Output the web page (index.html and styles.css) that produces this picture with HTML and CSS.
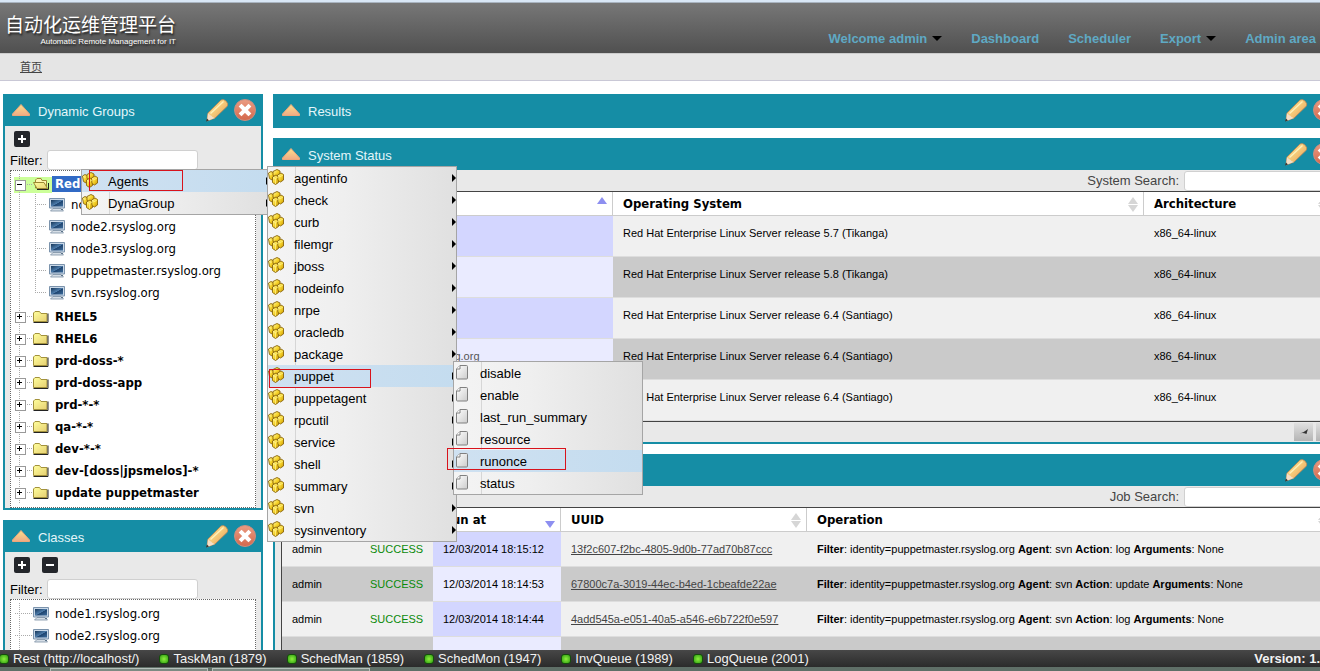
FILE: index.html
```html
<!DOCTYPE html>
<html lang="zh">
 <head>
  <meta charset="utf-8">
  <title>自动化运维管理平台</title>
  <link rel="stylesheet" href="styles.css">
 </head>
 <body>
  <svg class="defs" aria-hidden="true">
	<defs>
		<linearGradient id="gOrange" x1="0" y1="0" x2="0" y2="1"><stop offset="0" stop-color="#fbe08c"/><stop offset="1" stop-color="#f0aa84"/></linearGradient>
		<linearGradient id="gRed" x1="0" y1="0" x2="0" y2="1"><stop offset="0" stop-color="#eb9c82"/><stop offset="1" stop-color="#d4684c"/></linearGradient>
		<linearGradient id="gFolder" x1="0" y1="0" x2="1" y2="1"><stop offset="0" stop-color="#ffff9c"/><stop offset="1" stop-color="#e6cf72"/></linearGradient>
		<linearGradient id="gGold" x1="0" y1="0" x2="1" y2="1"><stop offset="0" stop-color="#fffbb0"/><stop offset=".5" stop-color="#f7d52c"/><stop offset="1" stop-color="#c99606"/></linearGradient>
		<linearGradient id="gPage" x1="0" y1="0" x2="1" y2="1"><stop offset="0" stop-color="#fff"/><stop offset="1" stop-color="#ccc"/></linearGradient>
		<linearGradient id="gScreen" x1="0" y1="0" x2="1" y2="1"><stop offset="0" stop-color="#173759"/><stop offset=".5" stop-color="#4d7cab"/><stop offset=".55" stop-color="#1f4570"/><stop offset="1" stop-color="#3d6c9c"/></linearGradient>
		<linearGradient id="gPencil" x1="0" y1="0" x2="1" y2="1"><stop offset="0" stop-color="#fce596"/><stop offset=".5" stop-color="#f5c877"/><stop offset="1" stop-color="#dd8f56"/></linearGradient>
	</defs>
	<symbol id="i-up" viewBox="0 0 20 14"><path d="M10 1.500L18.500 11V12.500H1.500V11Z" fill="url(#gOrange)" stroke="#eda77a" stroke-linejoin="round"/></symbol>
	<symbol id="i-pencil" viewBox="0 0 24 24"><path d="M3 15L16 2Q18.500 .5 21 3T22.500 8L10 20L2 23Z" fill="url(#gPencil)" stroke="#b98655" stroke-width=".8"/><path d="M3 15Q4 16.500 5 17Q6.500 17.500 7.500 19L10 20L2 23Z" fill="#f3dfc8"/><path d="M5.500 15.500L18.500 3.500" stroke="#fff0b8" stroke-width="1.500"/><path d="M2 20.500L1 23.500L4 22.500Z" fill="#333"/></symbol>
	<symbol id="i-close" viewBox="0 0 24 24"><circle cx="12" cy="12" r="10.500" fill="url(#gRed)" stroke="#c98e80" stroke-width="1"/><path d="M8.500 8.500L15.500 15.500M15.500 8.500L8.500 15.500" stroke="#fff" stroke-width="4" stroke-linecap="square"/></symbol>
	<symbol id="i-plus" viewBox="0 0 16 16"><rect width="16" height="16" rx="2" fill="#24262b"/><path d="M8 4V12M4 8H12" stroke="#fff" stroke-width="2"/></symbol>
	<symbol id="i-minus" viewBox="0 0 16 16"><rect width="16" height="16" rx="2" fill="#24262b"/><path d="M4 8H12" stroke="#fff" stroke-width="2"/></symbol>
	<symbol id="i-folder" viewBox="0 0 16 16"><path d="M.5 12.500V4L2 2.500H6.500L8 4.500H14V12.500Z" fill="url(#gFolder)" stroke="#a3923c"/><path d="M.5 13.500H15V4.500" fill="none" stroke="#222"/></symbol>
	<symbol id="i-open" viewBox="0 0 16 16"><path d="M2.500 12V4L4 2.500H8L9 4.500H13.500V12Z" fill="#fff8b0" stroke="#9b8a35"/><path d="M.5 6.500H11L14.500 12.500H4Z" fill="url(#gFolder)" stroke="#9b8a35"/><path d="M4 13.500H15.500V7" fill="none" stroke="#222"/></symbol>
	<symbol id="i-pc" viewBox="0 0 16 16"><path d="M.5 1.500H15.500V11H.5Z" fill="#c9d8e8" stroke="#7b93ac"/><path d="M2 3H14V9.500H2Z" fill="url(#gScreen)"/><path d="M4 11.500H12L14.500 14H1.500Z" fill="#d6dee6" stroke="#7b8fa3" stroke-width=".8"/><path d="M12 12.500H14" stroke="#5b7288"/></symbol>
	<symbol id="i-bricks" viewBox="0 0 17 17"><g fill="url(#gGold)" stroke="#8a6508" stroke-width=".9" stroke-linejoin="round"><path d="M.5 4L3 2.500L6 4V9L4 11L1.500 9.500Z"/><path d="M5 2.500L9 .5L12 2V5L8 8L5 6.500Z"/><path d="M4.500 8L8 6L10.500 7.500V13.500L7.500 15.500L4.500 13.500Z"/><path d="M9.500 6L13 4L15.500 5.500V11L12.500 13L10 11.500Z"/></g><path d="M5 8.500L7.500 9.500L10 8M7.500 9.500V15M10 6.500L12.500 7.500L15 6M1 4.500L3.500 5.500" stroke="#fff69a" stroke-width=".7" fill="none"/></symbol>
	<symbol id="i-page" viewBox="0 0 17 17"><path d="M6 1.500H12.500Q13.500 1.500 13.500 2.500V14Q13.500 15 12.500 15H3.500Q2.500 15 2.500 14V5Z" fill="url(#gPage)" stroke="#808080"/><path d="M6 1.500V5H2.500" fill="#fff" stroke="#808080"/></symbol>
  </svg>
  <div class="strip"></div>
  <header class="top">
	<div class="logo">
		<h1>自动化运维管理平台</h1>
		<p>Automatic Remote Management for IT</p>
	</div>
	<nav>
		<a href="#" class="drop">Welcome admin</a>
		<a href="#">Dashboard</a>
		<a href="#">Scheduler</a>
		<a href="#" class="drop">Export</a>
		<a href="#" class="drop">Admin area</a>
	</nav>
  </header>
  <div class="crumb"><a href="#">首页</a></div>

  <div class="page">
	<aside class="side">
		<section class="panel">
			<div class="title">
				<svg class="up"><use href="#i-up"/></svg>
				<h2>Dynamic Groups</h2>
				<button aria-label="Edit"><svg><use href="#i-pencil"/></svg></button>
				<button aria-label="Close"><svg><use href="#i-close"/></svg></button>
			</div>
			<div class="tools">
				<button aria-label="Expand"><svg><use href="#i-plus"/></svg></button>
			</div>
			<div class="filter"><label for="f1">Filter:</label><input type="text" id="f1"></div>
			<ul class="tree">
				<li class="open">
					<div class="row current"><i class="box"></i><svg><use href="#i-open"/></svg><b>Red</b></div>
					<ul>
						<li class="row"><svg><use href="#i-pc"/></svg>node1.rsyslog.org</li>
						<li class="row"><svg><use href="#i-pc"/></svg>node2.rsyslog.org</li>
						<li class="row"><svg><use href="#i-pc"/></svg>node3.rsyslog.org</li>
						<li class="row"><svg><use href="#i-pc"/></svg>puppetmaster.rsyslog.org</li>
						<li class="row"><svg><use href="#i-pc"/></svg>svn.rsyslog.org</li>
					</ul>
					<!-- right click menu -->
					<ul class="menu context">
						<li class="sub hover"><svg><use href="#i-bricks"/></svg>Agents<span class="mark m1"></span>
							<ul class="menu">
								<li class="sub"><svg><use href="#i-bricks"/></svg>agentinfo</li>
								<li class="sub"><svg><use href="#i-bricks"/></svg>check</li>
								<li class="sub"><svg><use href="#i-bricks"/></svg>curb</li>
								<li class="sub"><svg><use href="#i-bricks"/></svg>filemgr</li>
								<li class="sub"><svg><use href="#i-bricks"/></svg>jboss</li>
								<li class="sub"><svg><use href="#i-bricks"/></svg>nodeinfo</li>
								<li class="sub"><svg><use href="#i-bricks"/></svg>nrpe</li>
								<li class="sub"><svg><use href="#i-bricks"/></svg>oracledb</li>
								<li class="sub"><svg><use href="#i-bricks"/></svg>package</li>
								<li class="sub hover"><svg><use href="#i-bricks"/></svg>puppet<span class="mark m2"></span>
									<ul class="menu">
										<li><svg><use href="#i-page"/></svg>disable</li>
										<li><svg><use href="#i-page"/></svg>enable</li>
										<li><svg><use href="#i-page"/></svg>last_run_summary</li>
										<li><svg><use href="#i-page"/></svg>resource</li>
										<li class="hover"><svg><use href="#i-page"/></svg>runonce<span class="mark m3"></span></li>
										<li><svg><use href="#i-page"/></svg>status</li>
									</ul>
								</li>
								<li class="sub"><svg><use href="#i-bricks"/></svg>puppetagent</li>
								<li class="sub"><svg><use href="#i-bricks"/></svg>rpcutil</li>
								<li class="sub"><svg><use href="#i-bricks"/></svg>service</li>
								<li class="sub"><svg><use href="#i-bricks"/></svg>shell</li>
								<li class="sub"><svg><use href="#i-bricks"/></svg>summary</li>
								<li class="sub"><svg><use href="#i-bricks"/></svg>svn</li>
								<li class="sub"><svg><use href="#i-bricks"/></svg>sysinventory</li>
							</ul>
						</li>
						<li class="sub"><svg><use href="#i-bricks"/></svg>DynaGroup</li>
					</ul>
				</li>
				<li class="row"><i class="box plus"></i><svg><use href="#i-folder"/></svg><b>RHEL5</b></li>
				<li class="row"><i class="box plus"></i><svg><use href="#i-folder"/></svg><b>RHEL6</b></li>
				<li class="row"><i class="box plus"></i><svg><use href="#i-folder"/></svg><b>prd-doss-*</b></li>
				<li class="row"><i class="box plus"></i><svg><use href="#i-folder"/></svg><b>prd-doss-app</b></li>
				<li class="row"><i class="box plus"></i><svg><use href="#i-folder"/></svg><b>prd-*-*</b></li>
				<li class="row"><i class="box plus"></i><svg><use href="#i-folder"/></svg><b>qa-*-*</b></li>
				<li class="row"><i class="box plus"></i><svg><use href="#i-folder"/></svg><b>dev-*-*</b></li>
				<li class="row"><i class="box plus"></i><svg><use href="#i-folder"/></svg><b>dev-[doss|jpsmelos]-*</b></li>
				<li class="row"><i class="box plus"></i><svg><use href="#i-folder"/></svg><b>update puppetmaster</b></li>
			</ul>
		</section>
		<section class="panel">
			<div class="title">
				<svg class="up"><use href="#i-up"/></svg>
				<h2>Classes</h2>
				<button aria-label="Edit"><svg><use href="#i-pencil"/></svg></button>
				<button aria-label="Close"><svg><use href="#i-close"/></svg></button>
			</div>
			<div class="tools two">
				<button aria-label="Expand"><svg><use href="#i-plus"/></svg></button>
				<button aria-label="Collapse"><svg><use href="#i-minus"/></svg></button>
			</div>
			<div class="filter"><label for="f2">Filter:</label><input type="text" id="f2"></div>
			<ul class="tree">
				<li class="row"><i></i><svg><use href="#i-pc"/></svg>node1.rsyslog.org</li>
				<li class="row"><i></i><svg><use href="#i-pc"/></svg>node2.rsyslog.org</li>
				<li class="row"><i></i></li>
			</ul>
		</section>
	</aside>

	<main>
		<section class="panel">
			<div class="title">
				<svg class="up"><use href="#i-up"/></svg>
				<h2>Results</h2>
				<button aria-label="Edit"><svg><use href="#i-pencil"/></svg></button>
				<button aria-label="Close"><svg><use href="#i-close"/></svg></button>
			</div>
		</section>
		<section class="panel">
			<div class="title">
				<svg class="up"><use href="#i-up"/></svg>
				<h2>System Status</h2>
				<button aria-label="Edit"><svg><use href="#i-pencil"/></svg></button>
				<button aria-label="Close"><svg><use href="#i-close"/></svg></button>
			</div>
			<div class="search"><label for="s1">System Search:</label><input type="text" id="s1"></div>
			<table class="system">
				<colgroup><col class="c-sel"><col class="c-name"><col class="c-os"><col></colgroup>
				<thead><tr><th></th><th class="asc"></th><th class="sort">Operating System</th><th class="sort">Architecture</th></tr></thead>
				<tbody>
					<tr><td class="on"></td><td class="on"></td><td>Red Hat Enterprise Linux Server release 5.7 (Tikanga)</td><td>x86_64-linux</td></tr>
					<tr><td class="on"></td><td class="on"></td><td>Red Hat Enterprise Linux Server release 5.8 (Tikanga)</td><td>x86_64-linux</td></tr>
					<tr><td class="on"></td><td class="on"></td><td>Red Hat Enterprise Linux Server release 6.4 (Santiago)</td><td>x86_64-linux</td></tr>
					<tr><td class="on"></td><td class="on">puppetmaster.rsyslog.org</td><td>Red Hat Enterprise Linux Server release 6.4 (Santiago)</td><td>x86_64-linux</td></tr>
					<tr><td class="on"></td><td class="on"></td><td>Red Hat Enterprise Linux Server release 6.4 (Santiago)</td><td>x86_64-linux</td></tr>
				</tbody>
			</table>
			<div class="pager">
				<button aria-label="Previous"><svg viewBox="0 0 10 8"><path d="M0 5.500Q4 5 9 1Q8 4 7.500 6Q4 4.500 0 5.500Z" fill="#333"/></svg></button>
				<button aria-label="Next"></button>
			</div>
		</section>
		<section class="panel">
			<div class="title">
				<svg class="up"><use href="#i-up"/></svg>
				<h2></h2>
				<button aria-label="Edit"><svg><use href="#i-pencil"/></svg></button>
				<button aria-label="Close"><svg><use href="#i-close"/></svg></button>
			</div>
			<div class="search"><label for="s2">Job Search:</label><input type="text" id="s2"></div>
			<table class="jobs">
				<colgroup><col class="c-user"><col class="c-status"><col class="c-run"><col class="c-uuid"><col></colgroup>
				<thead><tr><th></th><th></th><th class="desc">Run at</th><th class="sort">UUID</th><th class="sort">Operation</th></tr></thead>
				<tbody>
					<tr><td>admin</td><td class="ok">SUCCESS</td><td class="on">12/03/2014 18:15:12</td><td><a href="#">13f2c607-f2bc-4805-9d0b-77ad70b87ccc</a></td><td><b>Filter</b>: identity=puppetmaster.rsyslog.org <b>Agent</b>: svn <b>Action</b>: log <b>Arguments</b>: None</td></tr>
					<tr><td>admin</td><td class="ok">SUCCESS</td><td class="on">12/03/2014 18:14:53</td><td><a href="#">67800c7a-3019-44ec-b4ed-1cbeafde22ae</a></td><td><b>Filter</b>: identity=puppetmaster.rsyslog.org <b>Agent</b>: svn <b>Action</b>: update <b>Arguments</b>: None</td></tr>
					<tr><td>admin</td><td class="ok">SUCCESS</td><td class="on">12/03/2014 18:14:44</td><td><a href="#">4add545a-e051-40a5-a546-e6b722f0e597</a></td><td><b>Filter</b>: identity=puppetmaster.rsyslog.org <b>Agent</b>: svn <b>Action</b>: log <b>Arguments</b>: None</td></tr>
					<tr><td></td><td></td><td class="on"></td><td></td><td></td></tr>
				</tbody>
			</table>
		</section>
	</main>
  </div>

  <footer>
	<ul>
		<li>Rest (http://localhost/)</li>
		<li>TaskMan (1879)</li>
		<li>SchedMan (1859)</li>
		<li>SchedMon (1947)</li>
		<li>InvQueue (1989)</li>
		<li>LogQueue (2001)</li>
	</ul>
	<strong>Version: 1.</strong>
  </footer>
  <div class="taskbar"><span></span><span></span></div>
 </body>
</html>
```
FILE: styles.css
```css
*{margin:0;padding:0;box-sizing:border-box;}
body{
	height:100vh;
	display:flex;
	flex-direction:column;
	overflow:hidden;
	background:#fff;
	color:#000;
	font:13px/16px "Liberation Sans","Noto Sans CJK SC",sans-serif;
}
ul{list-style:none;}
svg{display:block;flex:none;}
button{
	border:0;
	background:none;
	cursor:pointer;
}
.defs{position:absolute;width:0;height:0;}

/* header */
.strip{
	height:3px;
	flex:none;
	background:#d9e7f6;
	border-bottom:1px solid #a9b4c0;
}
.top{
	height:50px;
	flex:none;
	display:flex;
	justify-content:space-between;
	background:linear-gradient(#777,#505050);
}
.logo{
	padding:8px 0 0 5px;
	color:#fff;
	text-shadow:1px 2px 2px #222;
}
.logo h1{
	font-size:19px;
	line-height:26px;
	font-weight:normal;
	font-family:"Noto Sans CJK SC",sans-serif;
}
.logo p{
	font-size:8px;
	line-height:10px;
	text-align:right;
}
nav{
	display:flex;
	gap:29px;
	padding-top:28px;
	margin-right:-11px;
	white-space:nowrap;
}
nav a{
	color:#5fa9c4;
	font-weight:bold;
	text-decoration:none;
}
.drop::after{
	content:"";
	display:inline-block;
	margin-left:5px;
	vertical-align:2px;
	border:5px solid transparent;
	border-top-color:#000;
	border-bottom:0;
}
.crumb{
	height:28px;
	flex:none;
	padding:5px 20px;
	background:#e5e5e5;
	border-top:1px solid #ccc;
	border-bottom:1px solid #c9c8d6;
	font-size:11px;
}
.crumb a{color:#444;}

/* columns */
.page{
	flex:1;
	min-height:0;
	display:flex;
	gap:10px;
	padding:13px 0 0 3px;
	margin-right:-22px;
	overflow:hidden;
}
.side{width:260px;flex:none;}
main{flex:1;min-width:0;}
.panel{
	border:2px solid #158da5;
	border-top:0;
	background:#e9e9e9;
	margin-bottom:10px;
}
.title{
	height:32px;
	display:flex;
	align-items:center;
	background:#158da5;
	color:#e4f6fa;
	padding:0 4px 0 6px;
}
.title h2{
	flex:1;
	font-size:13px;
	font-weight:normal;
	margin-left:7px;
	padding-top:4px;
}
.title .up{width:20px;height:14px;}
.title button{margin-left:4px;}
.title button svg{width:24px;height:24px;}
.tools{
	display:flex;
	gap:12px;
	padding:5px 9px 3px;
}
.tools.two{padding-bottom:6px;}
.tools svg{width:16px;height:16px;}
input{
	width:151px;
	height:20px;
	border:1px solid #d0d0d0;
	border-radius:3px;
	background:#fff;
}
.filter{
	display:flex;
	align-items:center;
	gap:4px;
	padding-left:5px;
}
.filter label{padding-top:2px;}

/* tree */
.tree{
	margin:0 5px;
	padding:3px 0;
	border:1px dotted #666;
	background:#fff;
	font-family:"DejaVu Sans Condensed","Noto Sans",sans-serif;
}
.row{
	height:22px;
	display:flex;
	align-items:center;
	padding-left:4px;
}
.row svg{width:16px;height:16px;margin-right:6px;}
.row i{
	width:18px;
	height:22px;
	flex:none;
	position:relative;
	background:linear-gradient(90deg,#aaa 50%,transparent 50%) 4px 10px/2px 1px repeat-x,
		linear-gradient(#aaa 50%,transparent 50%) 4px 0/1px 2px repeat-y;
}
.box::before{
	content:"";
	position:absolute;
	left:0;
	top:6px;
	width:9px;
	height:9px;
	border:1px solid #999;
	background:linear-gradient(#000,#000) 1px 3px/5px 1px no-repeat,#fff;
}
.plus::before{
	background:linear-gradient(#000,#000) 1px 3px/5px 1px no-repeat,linear-gradient(#000,#000) 3px 1px/1px 5px no-repeat,#fff;
}
.open{
	position:relative;
	padding-bottom:2px;
	background:linear-gradient(#aaa 50%,transparent 50%) 8px 6px/1px 2px repeat-y;
}
.open .current{
	height:20px;
	background:linear-gradient(#cf9,#cf9) 3px 3px/38px 16px no-repeat;
}
.current i{height:20px;}
.current svg{margin-right:3px;}
.current b{
	background:#316ac5;
	color:#fff;
	padding:0 3px;
}
.open ul .row{
	padding-left:38px;
	background:repeating-linear-gradient(90deg,#aaa 0 1px,transparent 1px 2px) 24px 10px/12px 1px no-repeat,
		repeating-linear-gradient(#aaa 0 1px,transparent 1px 2px) 24px 0/1px 22px no-repeat;
}
.open ul .row:last-child{
	background-size:12px 1px,1px 11px;
}

/* menus */
.menu{
	position:absolute;
	z-index:5;
	left:185px;
	top:-4px;
	width:190px;
	border:1px solid #a5a5a5;
	background:linear-gradient(#d6d6d6,#d6d6d6) 27px 0/1px 100% no-repeat,linear-gradient(90deg,#f4f4f4,#efefef 40%,#e0e0e0);
	font-family:"Liberation Sans",sans-serif;
}
.context{left:70px;top:-5px;}
.menu li{
	height:22px;
	display:flex;
	align-items:center;
	position:relative;
	padding-top:2px;
}
.menu li svg{width:17px;height:17px;margin:-4px 9px 0 0;}
.menu .hover{background:linear-gradient(90deg,#cfe1f1,#c4dcef);}
.sub::after{
	content:"";
	position:absolute;
	right:0;
	top:7px;
	border:4px solid transparent;
	border-left:4px solid #000;
	border-right:0;
}
.mark{
	position:absolute;
	z-index:9;
	border:1px solid #d8131c;
}
.m1{left:7px;top:0;width:94px;height:21px;}
.m2{left:1px;top:4px;width:102px;height:19px;}
.m3{left:-7px;top:-2px;width:119px;height:22px;}

/* tables */
.search{
	height:21px;
	display:flex;
	justify-content:flex-end;
	align-items:center;
	gap:5px;
	padding-right:5px;
	color:#444;
}
table{
	width:calc(100% - 12px);
	margin:0 6px;
	table-layout:fixed;
	border-spacing:0;
	border:1px solid #444;
	border-width:1px 0 1px 1px;
}
th{
	height:24px;
	padding:1px 10px 0;
	text-align:left;
	font:bold 13px/16px "DejaVu Sans Condensed","Noto Sans",sans-serif;
	background:#fff;
	border-right:1px solid #ccc;
	border-bottom:1px solid #ccc;
}
.sort,.asc,.desc{position:relative;}
.sort::before,.sort::after,.asc::before,.desc::after{
	content:"";
	position:absolute;
	right:5px;
	border:5px solid transparent;
}
.sort::before,.asc::before{
	top:5px;
	border-top:0;
	border-bottom:7px solid #d6d6d6;
}
.sort::after,.desc::after{
	top:13px;
	border-bottom:0;
	border-top:7px solid #d6d6d6;
}
.asc::before{border-bottom-color:#8d8ff0;}
.desc::after{border-top-color:#8d8ff0;}
td{
	height:41px;
	padding:0 10px 5px;
	font-size:11px;
	line-height:13px;
	white-space:nowrap;
	background:#f0f0f0;
	border-bottom:1px solid #ddd;
}
.jobs td{height:35px;padding-bottom:0;}
tr:nth-child(even) td{background:#cacaca;}
td.on{background:#d3d6ff;}
tr:nth-child(even) td.on{background:#eaebff;}
.system .on{color:#555;}
td a{color:#444;}
td.ok{color:#0a8a0a;}
.c-sel{width:64px;}
.c-name{width:267px;}
.c-os{width:531px;}
.c-user{width:78px;}
.c-status{width:73px;}
.c-run{width:128px;}
.c-uuid{width:246px;}
.pager{
	height:20px;
	display:flex;
	justify-content:flex-end;
	gap:3px;
	padding:1px 5px 0;
}
.pager button{
	width:19px;
	height:18px;
	background:linear-gradient(#e0e0e0,#b4b4b4);
}
.pager svg{width:10px;height:8px;margin:0 auto;}

/* status bar */
footer{
	height:17px;
	flex:none;
	display:flex;
	justify-content:space-between;
	align-items:center;
	padding-top:1px;
	background:linear-gradient(#474747,#2b2b2b);
	color:#f2f2f2;
}
footer ul{
	display:flex;
	gap:20px;
	margin-left:-1px;
}
footer li{
	display:flex;
	align-items:center;
	gap:4px;
}
footer li::before{
	content:"";
	width:8px;
	height:8px;
	border-radius:3px;
	border:1px solid #14500a;
	background:radial-gradient(#8cf03c,#2f9d12);
}
.taskbar{
	height:4px;
	flex:none;
	display:flex;
	gap:4px;
	padding:1px 0 0 50px;
	background:#5f6f67;
}
.taskbar span{
	width:158px;
	background:#7c8a83;
	border:1px solid #b5bfba;
	border-bottom:0;
}
```
